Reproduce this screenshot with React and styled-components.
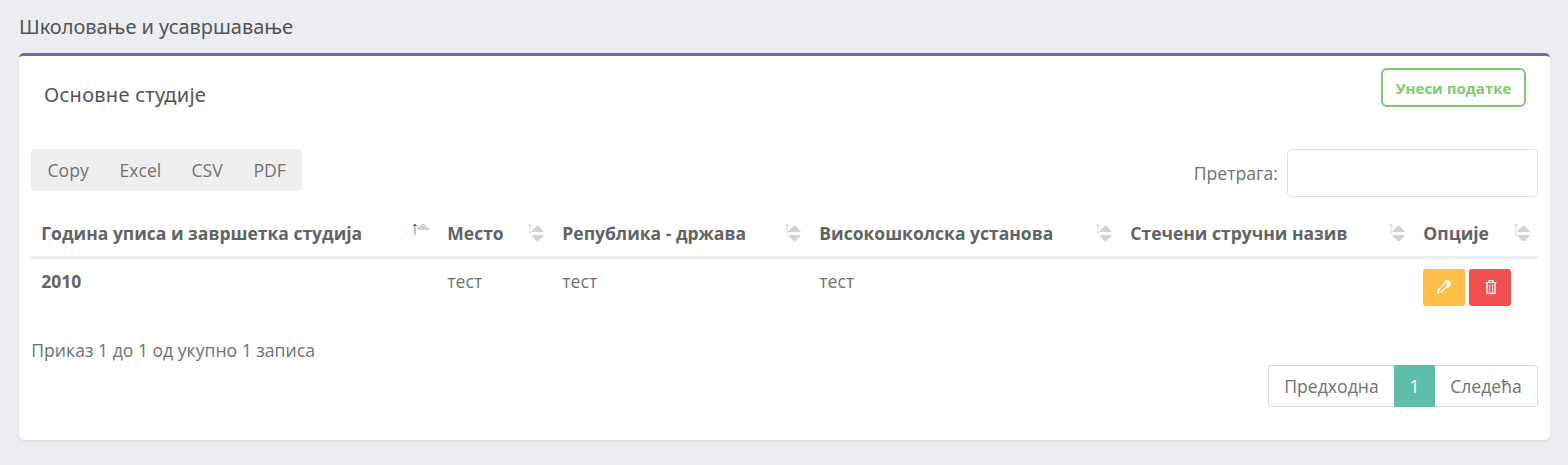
import React from 'react';
import styled, { createGlobalStyle } from 'styled-components';

const GlobalStyle = createGlobalStyle`
  * { box-sizing: border-box; }
  body {
    margin: 0;
    background: #eaeef1;
    color: #717171;
    font-family: "Open Sans", sans-serif;
    font-size: 17.6px;
    line-height: 24px;
  }
`;

const Page = styled.main`
  height: 465px;
  padding: 12px 18px 0 19px;
`;

const PageTitle = styled.h1`
  margin: 0 0 11px;
  font: 400 20px/30px "Noto Sans", sans-serif;
  letter-spacing: -0.03px;
  color: #505458;
`;

const Card = styled.section`
  height: 387px;
  padding: 12px 12px 0;
  border-top: 3px solid #7266ba;
  border-radius: 5px;
  background: #fff;
  box-shadow: 0 1px 2px rgba(0, 0, 0, 0.08);
`;

const CardHeader = styled.header`
  display: flex;
  justify-content: space-between;
  align-items: flex-start;
  height: 81px;
  padding: 0 12px 0 13px;
`;

const CardTitle = styled(PageTitle).attrs({ as: 'h2' })`
  margin: 12px 0 0;
  letter-spacing: 0.27px;
`;

const AddButton = styled.button`
  width: 145px;
  height: 39px;
  padding: 0;
  border: 2px solid #7fca69;
  border-radius: 6px;
  background: #fff;
  color: #7fca69;
  font: 700 15px/24px "Open Sans", sans-serif;
`;

const Toolbar = styled.div`
  display: flex;
  justify-content: space-between;
  align-items: flex-start;
  height: 62px;
`;

const ExportGroup = styled.div`
  display: flex;
  width: 271px;
  height: 42px;
  border-radius: 4px;
  background: #efefef;
`;

const ExportButton = styled.button`
  width: ${(p) => p.$width}px;
  padding: 0 0 0 16.5px;
  border: 0;
  background: none;
  color: #717171;
  font: inherit;
  text-align: left;
`;

const SearchLabel = styled.label`
  display: flex;
  align-items: center;
  gap: 9px;
`;

const SearchInput = styled.input`
  width: 251px;
  height: 48px;
  border: 1px solid #e0e0e0;
  border-radius: 5px;
  background: #fff;
`;

const Table = styled.table`
  width: 1507px;
  border-collapse: separate;
  border-spacing: 0;
  table-layout: fixed;
`;

const HeadCell = styled.th`
  width: ${(p) => p.$width}px;
  height: 48px;
  padding: 0 8px 2px 10.3px;
  border-bottom: 3px solid #eaeef1;
  color: #616365;
  font-size: 17.5px;
  font-weight: 700;
  text-align: left;
  white-space: nowrap;
`;

const HeadContent = styled.div`
  display: flex;
  justify-content: space-between;
  align-items: center;
`;

const SortIcon = styled.svg`
  flex: none;
  margin-top: -1px;
`;

const Cell = styled.td`
  height: 58px;
  padding: 10px 10px 0 10.3px;
  vertical-align: top;
`;

const YearCell = styled(Cell)`
  color: #616365;
  font-size: 17.5px;
  font-weight: 700;
`;

const ActionCell = styled(Cell)`
  padding-left: 10px;
`;

const Actions = styled.div`
  display: flex;
  gap: 4px;
`;

const ActionButton = styled.button`
  display: flex;
  align-items: center;
  justify-content: center;
  width: 42px;
  height: 37px;
  padding: 0 0 2px;
  border: 0;
  border-radius: 3px;
  background: ${(p) => p.$color};
`;

const Footer = styled.footer`
  display: flex;
  justify-content: space-between;
  padding-top: 21px;
`;

const Info = styled.div`
  padding-left: 0.3px;
`;

const Pagination = styled.nav`
  display: flex;
  height: 42px;
  margin-top: 27px;
`;

const PageButton = styled.button`
  width: ${(p) => p.$width}px;
  padding: 0;
  border: 1px solid ${(p) => (p.$active ? '#5dbdaa' : '#dcdcdc')};
  border-width: ${(p) => (p.$active ? '1px' : p.$first ? '1px 0 1px 1px' : '1px 1px 1px 0')};
  border-radius: ${(p) => (p.$active ? '0' : p.$first ? '4px 0 0 4px' : '0 4px 4px 0')};
  background: ${(p) => (p.$active ? '#5dbdaa' : '#fff')};
  color: ${(p) => (p.$active ? '#fff' : '#717171')};
  font: inherit;
`;

const COLUMNS = [
  { label: 'Година уписа и завршетка студија', width: 406, sorted: true },
  { label: 'Место', width: 115 },
  { label: 'Република - држава', width: 257 },
  { label: 'Високошколска установа', width: 311 },
  { label: 'Стечени стручни назив', width: 293 },
  { label: 'Опције', width: 125 },
];

function SortMark({ sorted }) {
  return (
    <SortIcon width="17" height="20" viewBox="0 0 17 20" aria-hidden="true">
      <path d="M2.5 13V3" stroke={sorted ? '#e0a690' : '#f3e4da'} />
      <path d="M3.5 13V3" stroke={sorted ? '#a3d0f3' : '#e6ecf0'} />
      <path d="M1 3.5H5M2 2.5H4" stroke={sorted ? '#6d6d72' : '#dedbd8'} />
      {sorted ? (
        <path d="M5 8V7L10 2H12L17 7V8Z" fill="#d2d2d2" />
      ) : (
        <path d="M4.5 10V9L9.5 4H11.5L16.5 9V10ZM4.5 13H16.5V14L11.5 19H9.5L4.5 14Z" fill="#d2d2d2" />
      )}
    </SortIcon>
  );
}

function PencilIcon() {
  return (
    <svg width="14" height="14" viewBox="0 0 14 14" fill="none" stroke="#fff" strokeWidth="1.3" strokeLinejoin="round">
      <path d="M.8 13.2L1.7 9.2L8.4 2.6L10.9 5.1L4.5 11.9Z" />
      <path d="M7.4 2.8L9.2 1H11.2L13.2 3V4.5L10 7.8M9.5 1.5L12.5 4.5" />
    </svg>
  );
}

function TrashIcon() {
  return (
    <svg width="14" height="14" viewBox="-2 0 14 14" fill="none" stroke="#fff">
      <path d="M.5 2.5H11.5M4 2V.5H8V2" strokeWidth="1.2" />
      <path d="M2 2.5V13.3H10V2.5" strokeWidth="1.4" />
      <path d="M4.5 4.5V11.5M7.5 4.5V11.5" strokeWidth="1.2" />
    </svg>
  );
}

export default function App() {
  return (
    <>
      <GlobalStyle />
      <Page>
        <PageTitle>Школовање и усавршавање</PageTitle>
        <Card>
          <CardHeader>
            <CardTitle>Основне студије</CardTitle>
            <AddButton>Унеси податке</AddButton>
          </CardHeader>
          <Toolbar>
            <ExportGroup>
              <ExportButton $width={72}>Copy</ExportButton>
              <ExportButton $width={72}>Excel</ExportButton>
              <ExportButton $width={62}>CSV</ExportButton>
              <ExportButton $width={65}>PDF</ExportButton>
            </ExportGroup>
            <SearchLabel>
              Претрага:
              <SearchInput type="search" />
            </SearchLabel>
          </Toolbar>
          <Table>
            <thead>
              <tr>
                {COLUMNS.map((c) => (
                  <HeadCell key={c.label} $width={c.width}>
                    <HeadContent>
                      {c.label}
                      <SortMark sorted={c.sorted} />
                    </HeadContent>
                  </HeadCell>
                ))}
              </tr>
            </thead>
            <tbody>
              <tr>
                <YearCell>2010</YearCell>
                <Cell>тест</Cell>
                <Cell>тест</Cell>
                <Cell>тест</Cell>
                <Cell />
                <ActionCell>
                  <Actions>
                    <ActionButton $color="#ffbd4a" aria-label="Измени"><PencilIcon /></ActionButton>
                    <ActionButton $color="#f05050" aria-label="Обриши"><TrashIcon /></ActionButton>
                  </Actions>
                </ActionCell>
              </tr>
            </tbody>
          </Table>
          <Footer>
            <Info>Приказ 1 до 1 од укупно 1 записа</Info>
            <Pagination>
              <PageButton $first $width={126}>Предходна</PageButton>
              <PageButton $active $width={41}>1</PageButton>
              <PageButton $width={103}>Следећа</PageButton>
            </Pagination>
          </Footer>
        </Card>
      </Page>
    </>
  );
}
